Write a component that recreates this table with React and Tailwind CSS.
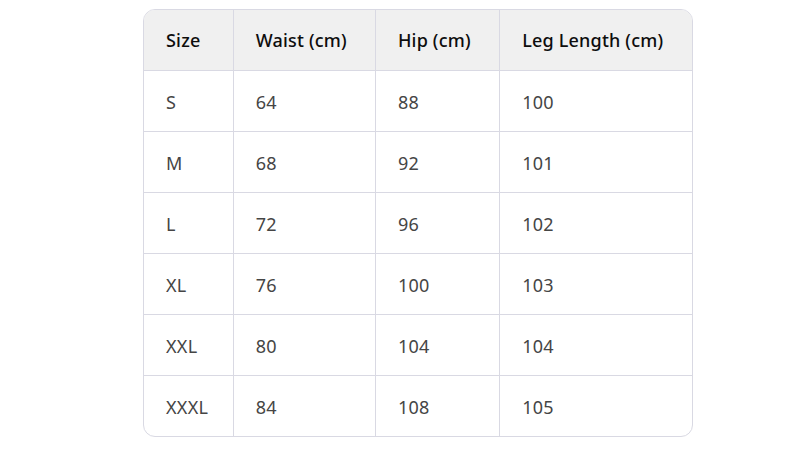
const ROWS = [
  ['S', '64', '88', '100'],
  ['M', '68', '92', '101'],
  ['L', '72', '96', '102'],
  ['XL', '76', '100', '103'],
  ['XXL', '80', '104', '104'],
  ['XXXL', '84', '108', '105'],
]

const HEAD = ['Size', 'Waist (cm)', 'Hip (cm)', 'Leg Length (cm)']
const WIDTHS = ['w-[89px]', 'w-[142px]', 'w-[124px]', 'w-[192px]']

export default function App() {
  return (
    <div className="w-[786px] h-[452px] bg-white font-['Noto_Sans',sans-serif] text-[18px]">
      <div className="pt-[9px] pl-[143px]">
        <div className="w-[550px] border border-[#d9d9e3] rounded-xl overflow-hidden">
          <table className="w-full border-collapse table-fixed">
            <thead>
              <tr className="h-[60px] bg-[#f0f0f0]">
                {HEAD.map((h, i) => (
                  <th
                    key={h}
                    className={`${WIDTHS[i]} text-left font-medium text-[#0d0d0d] pl-[22px] pt-[2px] tracking-[0.2px] border-b border-[#d9d9e3] ${i < 3 ? 'border-r' : ''}`}
                  >
                    {h}
                  </th>
                ))}
              </tr>
            </thead>
            <tbody>
              {ROWS.map((r, ri) => (
                <tr key={r[0]} className="h-[61px]">
                  {r.map((c, i) => (
                    <td
                      key={i}
                      className={`pl-[22px] pt-[3px] text-[#454545] tracking-[0.3px] border-[#d9d9e3] ${i < 3 ? 'border-r' : ''} ${ri < ROWS.length - 1 ? 'border-b' : ''}`}
                    >
                      {c}
                    </td>
                  ))}
                </tr>
              ))}
            </tbody>
          </table>
        </div>
      </div>
    </div>
  )
}
